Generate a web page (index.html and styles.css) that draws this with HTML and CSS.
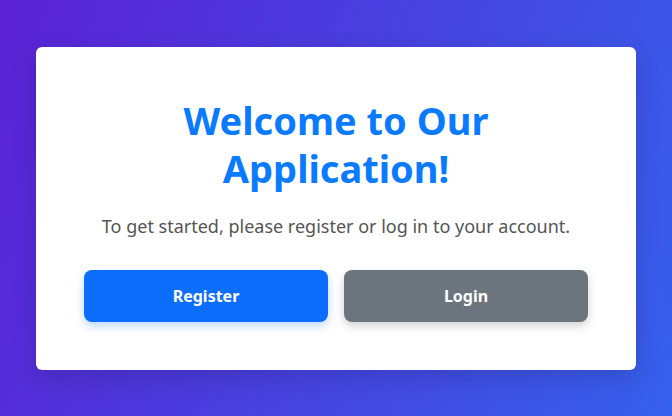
FILE: index.html
```html
<!DOCTYPE html>
<html lang="en">
<head>
<meta charset="utf-8">
<title>Welcome</title>
<link rel="stylesheet" href="styles.css">
</head>
<body>
  <main class="page">
    <section class="card">
      <h1 class="title">Welcome to Our Application!</h1>
      <p class="lead">To get started, please register or log in to your account.</p>
      <div class="actions">
        <button class="btn btn-primary" type="button">Register</button>
        <button class="btn btn-secondary" type="button">Login</button>
      </div>
    </section>
  </main>
</body>
</html>
```
FILE: styles.css
```css
* { box-sizing: border-box; }
html, body { margin: 0; height: 100%; }
body {
  font-family: "Noto Sans", "Open Sans", "DejaVu Sans", sans-serif;
  background: linear-gradient(110deg, #5a22d4 0%, #3660ec 100%);
}
.page {
  min-height: 100%;
  display: flex;
  align-items: center;
  justify-content: center;
}
.card {
  width: 600px;
  background: #fff;
  border-radius: 6px;
  padding: 49px 48px 48px;
  text-align: center;
  box-shadow: 0 8px 24px rgba(0,0,0,0.15);
}
.title {
  margin: 0 auto;
  max-width: 340px;
  color: #0a7bff;
  font-size: 38px;
  line-height: 48px;
  font-weight: 700;
}
.lead {
  margin: 21px 0 30px;
  color: #555;
  font-size: 18px;
  line-height: 27px;
}
.actions {
  display: flex;
  gap: 16px;
}
.btn {
  flex: 1;
  height: 52px;
  border: none;
  border-radius: 8px;
  color: #fff;
  font-family: inherit;
  font-size: 16px;
  font-weight: 700;
}
.btn-primary {
  background: #0d6efd;
  box-shadow: 0 4px 10px rgba(13,110,253,0.28);
}
.btn-secondary {
  background: #6c757d;
  box-shadow: 0 4px 10px rgba(0,0,0,0.18);
}
```
